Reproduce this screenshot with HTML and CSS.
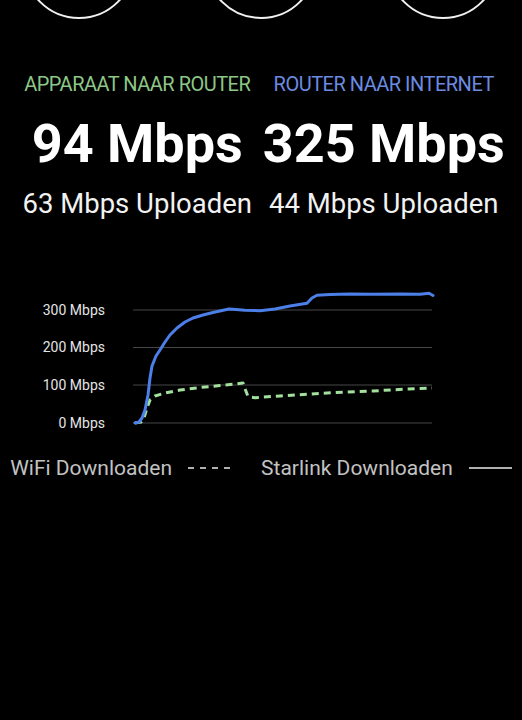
FILE: index.html
```html
<!DOCTYPE html>
<html lang="nl">
<head>
<meta charset="utf-8">
<title>Snelheidstest</title>
<link rel="stylesheet" href="styles.css">
</head>
<body>
<div class="dials">
  <div class="dial"></div>
  <div class="dial"></div>
  <div class="dial"></div>
</div>
<div class="stats">
  <div class="stat">
    <div class="label label-green">APPARAAT NAAR ROUTER</div>
    <div class="big">94 Mbps</div>
    <div class="up">63 Mbps Uploaden</div>
  </div>
  <div class="stat">
    <div class="label label-blue">ROUTER NAAR INTERNET</div>
    <div class="big">325 Mbps</div>
    <div class="up">44 Mbps Uploaden</div>
  </div>
</div>
<svg class="chart" width="522" height="150" viewBox="0 290 522 150">
  <g class="grid">
    <line x1="133" y1="310" x2="432" y2="310"/>
    <line x1="133" y1="347.5" x2="432" y2="347.5"/>
    <line x1="133" y1="385" x2="432" y2="385"/>
    <line x1="133" y1="423" x2="432" y2="423"/>
  </g>
  <g class="axis">
    <text x="105" y="314.5">300 Mbps</text>
    <text x="105" y="352">200 Mbps</text>
    <text x="105" y="389.5">100 Mbps</text>
    <text x="105" y="427.5">0 Mbps</text>
  </g>
  <path class="wifi" d="M135 423 L141 422 L144 418 L147 408 L150 400 L155 396 L165 393 L180 390 L200 387.5 L220 385.5 L235 384 L243 383 L245.5 390 L248 396.5 L255 397.7 L280 396 L327 393 L373 391 L407 389 L432 388"/>
  <path class="starlink" d="M135 423 L139 422 L142 418 L145 410 L148 395 L150 378 L152 366 L156 356 L160 350 L165 342 L170 335 L177 328 L185 322 L193 318 L203 315 L213 312.5 L222 310.5 L229 309 L236 309.5 L245 310.2 L260 310.7 L275 309 L290 306 L307 303.3 L312 298 L317 295.3 L330 294.5 L350 294 L373 294.3 L400 294 L420 294.3 L429 293.2 L433 295.5"/>
</svg>
<div class="legend">
  <div class="legend-item">
    <span class="legend-text">WiFi Downloaden</span>
    <svg class="legend-line" width="42" height="4" viewBox="0 0 42 4"><line class="dash" x1="0" y1="2" x2="42" y2="2"/></svg>
  </div>
  <div class="legend-item">
    <span class="legend-text">Starlink Downloaden</span>
    <svg class="legend-line" width="43" height="4" viewBox="0 0 43 4"><line class="solid" x1="0" y1="2" x2="43" y2="2"/></svg>
  </div>
</div>
</body>
</html>
```
FILE: styles.css
```css
html, body {
  margin: 0;
  padding: 0;
  background: #000;
}
body {
  width: 522px;
  height: 720px;
  overflow: hidden;
  font-family: Roboto, "Liberation Sans", sans-serif;
  color: #fff;
}
.dials {
  display: flex;
  gap: 70px;
  padding-left: 23px;
  margin-top: -93px;
}
.dial {
  width: 112px;
  height: 112px;
  box-sizing: border-box;
  border: 2.5px solid #f0f0f0;
  border-radius: 50%;
  flex: none;
}
.stats {
  display: grid;
  grid-template-columns: 1fr 1fr;
  padding: 0 15px 0 14px;
  margin-top: 53px;
  text-align: center;
}
.label {
  font-size: 20px;
  line-height: 24px;
  letter-spacing: -0.5px;
  white-space: nowrap;
}
.label-green { color: #8cc787; }
.label-blue { color: #6b8be0; }
.big {
  margin-top: 16px;
  font-size: 54px;
  line-height: 64px;
  font-weight: 700;
  white-space: nowrap;
}
.up {
  margin-top: 11px;
  font-size: 27.5px;
  line-height: 34px;
  color: #f2f2f2;
  white-space: nowrap;
}
.chart {
  display: block;
  margin-top: 69px;
}
.grid line {
  stroke: #474747;
  stroke-width: 1;
}
.axis text {
  font-family: Roboto, "Liberation Sans", sans-serif;
  font-size: 14px;
  fill: #e4e4e4;
  text-anchor: end;
}
.wifi {
  fill: none;
  stroke: #a3e09e;
  stroke-width: 3;
  stroke-dasharray: 7 5;
  stroke-linejoin: round;
}
.starlink {
  fill: none;
  stroke: #4c7fe8;
  stroke-width: 3;
  stroke-linejoin: round;
  stroke-linecap: round;
}
.legend {
  display: flex;
  justify-content: center;
  gap: 31px;
  margin-top: 15px;
}
.legend-item {
  display: flex;
  align-items: center;
  gap: 16px;
}
.legend-text {
  font-size: 21px;
  line-height: 26px;
  color: #c2c2c2;
  white-space: nowrap;
}
.legend-line {
  display: block;
  flex: none;
}
.dash {
  stroke: #b0b0b0;
  stroke-width: 2;
  stroke-dasharray: 6 6;
}
.solid {
  stroke: #b0b0b0;
  stroke-width: 2;
}
```
